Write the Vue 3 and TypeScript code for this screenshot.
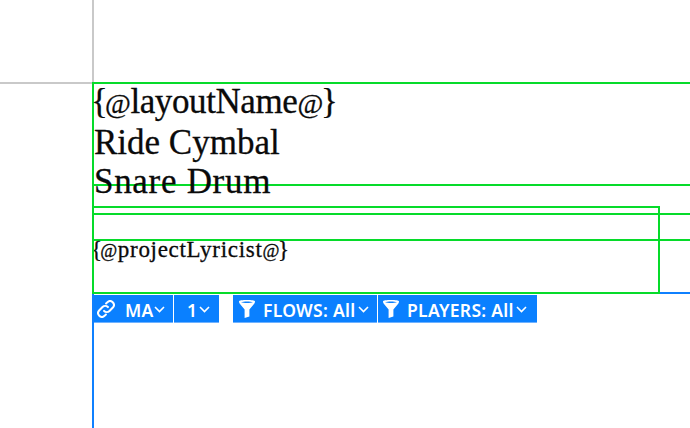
<script setup lang="ts">
interface ToolButton {
  label: string
  icon?: 'link' | 'filter'
  width: number
  pad: number
  gap: number
  chevGap: number
}
const groupA: ToolButton[] = [
  { label: 'MA', icon: 'link', width: 81, pad: 5, gap: 10, chevGap: 0 },
  { label: '1', width: 45, pad: 13, gap: 0, chevGap: 2 },
]
const groupB: ToolButton[] = [
  { label: 'FLOWS: All', icon: 'filter', width: 144, pad: 6, gap: 8, chevGap: 2 },
  { label: 'PLAYERS: All', icon: 'filter', width: 159, pad: 5, gap: 8, chevGap: 2 },
]
const groups = [groupA, groupB]
</script>

<template>
  <div class="page">
    <div class="corner"></div>
    <div class="sheet">
      <div class="titles">
        <div class="token name"><span class="open">{</span><span class="at">@</span>layoutName<span class="at close">@</span>}</div>
        <div>Ride Cymbal</div>
        <div class="wide">Snare Drum</div>
      </div>
      <div class="spacer-a"></div>
      <div class="band"></div>
      <div class="lyricist token"><span class="open">{</span><span class="at">@</span>projectLyricist<span class="at close">@</span>}</div>
      <div class="box-narrow"></div>
      <div class="blue-edge"></div>
    </div>
    <div class="toolbar">
      <div v-for="(group, g) in groups" :key="g" class="group">
        <button
          v-for="b in group"
          :key="b.label"
          class="tool"
          :style="{ width: b.width + 'px', paddingLeft: b.pad + 'px' }"
        >
          <svg v-if="b.icon === 'link'" class="icon" viewBox="2 2 16 16" fill="none" stroke="#fff" stroke-width="1.800" stroke-linecap="round">
            <path d="M8.300 11.700a3.400 3.400 0 0 0 4.800 0l3-3a3.400 3.400 0 0 0-4.800-4.800l-1.200 1.200" />
            <path d="M11.700 8.300a3.400 3.400 0 0 0-4.800 0l-3 3a3.400 3.400 0 0 0 4.800 4.800l1.200-1.200" />
          </svg>
          <svg v-else-if="b.icon === 'filter'" class="icon filter" viewBox="0 0 16 18">
            <path fill="#fff" fill-rule="evenodd" d="M0 1.200C0 .4 3.600 0 8 0s8 .4 8 1.200c0 .7-.2 1.600-.6 2.200L10.400 9.600V16.400l-4.800 1.600V9.600L.6 3.400C.2 2.800 0 1.900 0 1.200ZM2 2.200c1.300.5 3.600.7 6 .7s4.700-.2 6-.7c-1.300-.5-3.600-.7-6-.7s-4.700.2-6 .7Z" />
          </svg>
          <span class="label" :style="{ marginLeft: b.gap + 'px' }">{{ b.label }}</span>
          <svg class="chev" :style="{ marginLeft: b.chevGap + 'px' }" viewBox="0 0 11 7" fill="none" stroke="#fff" stroke-width="1.600">
            <path d="M1 1l4.500 4.500L10 1" />
          </svg>
        </button>
      </div>
    </div>
  </div>
</template>

<style>
html, body { margin: 0; background: #fff; overflow: hidden; }
</style>

<style scoped>
.page {
  position: relative;
  width: 690px;
  height: 428px;
  overflow: hidden;
  background: #fff;
}
.corner {
  width: 92px;
  height: 82px;
  border-right: 2px solid #c9c9c9;
  border-bottom: 2px solid #c9c9c9;
}
.sheet {
  position: absolute;
  left: 92px;
  top: 82px;
  width: 640px;
  height: 212px;
  border: 2px solid #06db2a;
  box-sizing: border-box;
  font-family: "Liberation Serif", serif;
  color: #0a0a0a;
  -webkit-text-stroke: 0.3px #0a0a0a;
}
.titles {
  height: 102px;
  margin-top: -2px;
  border-bottom: 2px solid #06db2a;
  font-size: 35px;
  line-height: 39px;
}
.wide { letter-spacing: 0.7px; }
.token { margin-left: -3px; }
.name { letter-spacing: -0.4px; }
.at { font-size: 0.8em; }
.open { letter-spacing: -0.08em; }
.close { letter-spacing: -0.08em; }
.spacer-a { height: 27px; }
.band { height: 24px; border-top: 2px solid #06db2a; border-bottom: 2px solid #06db2a; }
.lyricist {
  font-size: 23px;
  line-height: 18px;
  letter-spacing: 0.7px;
}
.box-narrow {
  position: absolute;
  left: -2px;
  top: 122px;
  width: 568px;
  height: 88px;
  border: 2px solid #06db2a;
  box-sizing: border-box;
}
.blue-edge {
  position: absolute;
  left: 566px;
  top: 208px;
  width: 100px;
  height: 2px;
  background: #0f80ff;
}
.toolbar {
  position: absolute;
  left: 92px;
  top: 295px;
  display: flex;
  gap: 14px;
}
.group { display: flex; gap: 1px; }
.tool {
  height: 28px;
  padding: 0;
  border: 0;
  border-bottom: 1px solid #6fb2ff;
  background: #0a80ff;
  color: #fff;
  display: flex;
  align-items: center;
  box-sizing: border-box;
  font: 600 17.500px "Noto Sans", sans-serif;
}
.icon { width: 18px; height: 18px; flex: none; }
.filter { width: 16px; height: 18px; }
.label { white-space: nowrap; padding-top: 2px; letter-spacing: 0.3px; }
.chev { width: 11px; height: 7px; margin-top: 1px; flex: none; }
.page::after {
  content: "";
  position: absolute;
  left: 92px;
  top: 294px;
  width: 2px;
  height: 134px;
  background: #0f80ff;
}
</style>
